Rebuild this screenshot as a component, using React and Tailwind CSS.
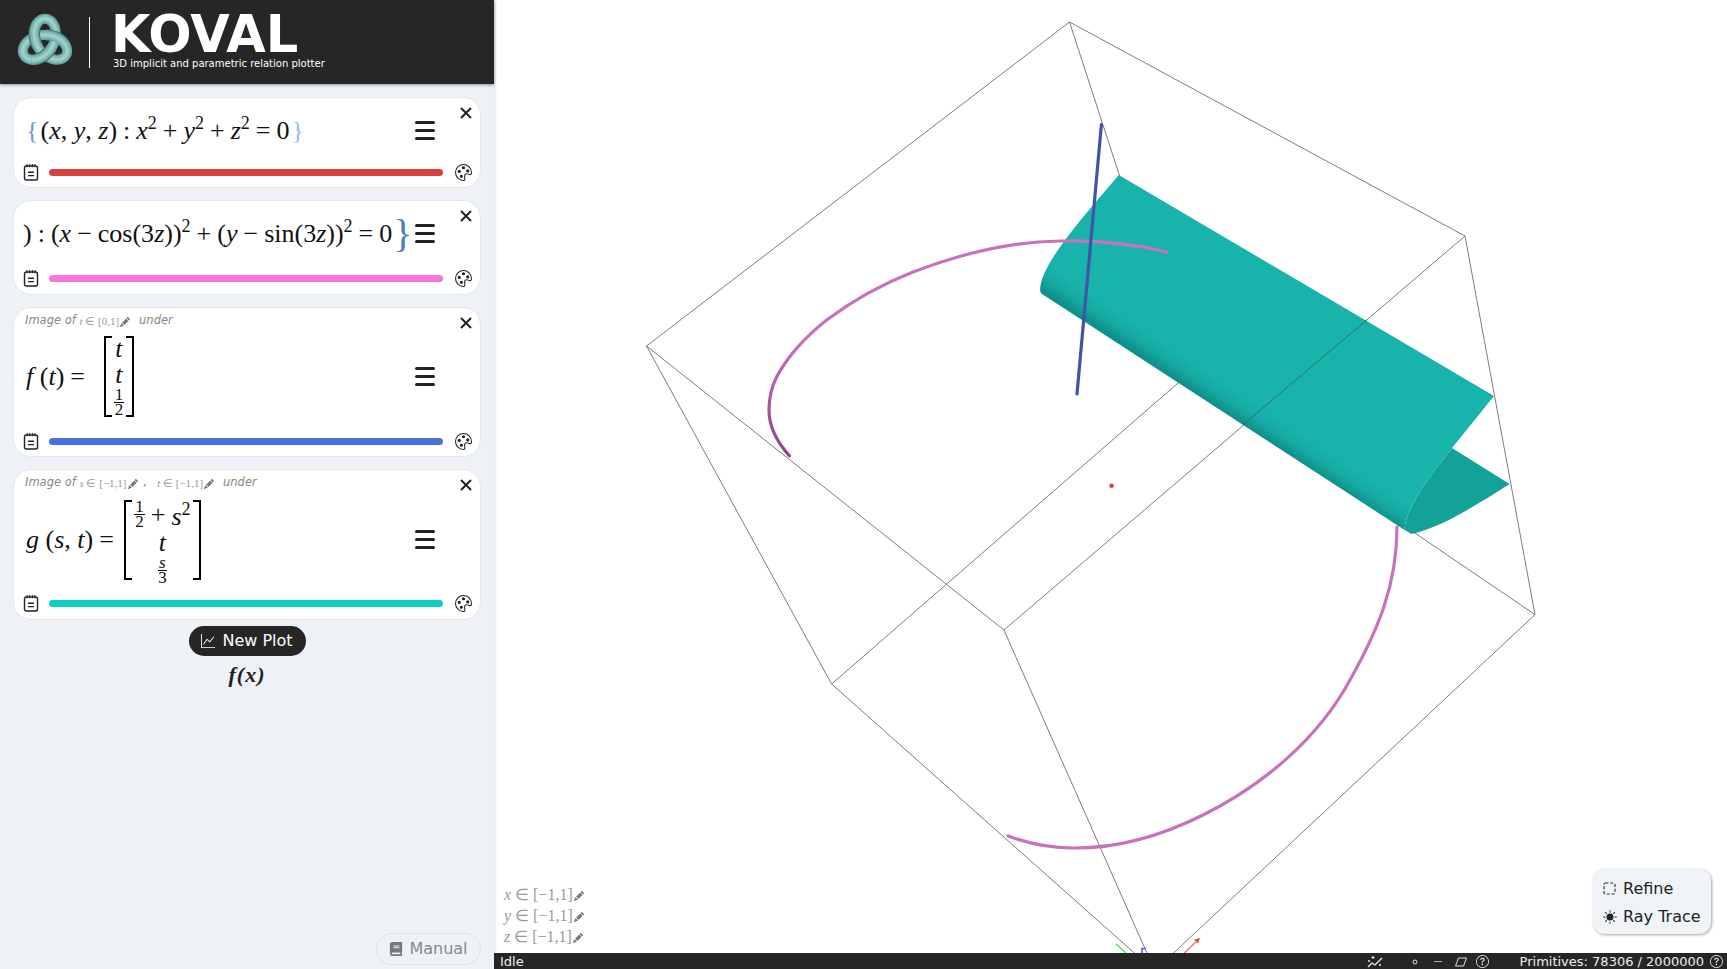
import React from 'react';
import { BsPalette, BsPencilFill, BsGraphUp, BsSunFill, BsQuestionCircle } from 'react-icons/bs';
import { FaBook } from 'react-icons/fa';

const serif = "font-['Liberation_Serif',serif]";

// Trefoil logo, over/under faked by redrawing the over strands
const knotPath = (from, to) => {
  const pts = [];
  for (let t = from; t <= to + 0.001; t += 0.04) {
    pts.push([
      (45 + 8.1 * (Math.sin(t) + 2 * Math.sin(2 * t))).toFixed(2),
      (43 + 8.1 * (Math.cos(t) - 2 * Math.cos(2 * t))).toFixed(2),
    ]);
  }
  return 'M' + pts.map((p) => p.join(' ')).join(' L');
};

const Strand = ({ d }) => (
  <>
    <path d={d} fill="none" stroke="#649d99" strokeWidth="10" />
    <path d={d} fill="none" stroke="#80b9b4" strokeWidth="7.5" />
    <path d={d} fill="none" stroke="#9ccfca" strokeWidth="3.5" />
  </>
);

const Logo = () => (
  <svg width="89" height="84" viewBox="0 0 89 84" className="shrink-0">
    <Strand d={knotPath(0, Math.PI * 2 + 0.04)} />
    {[0.271, 2.366, 4.46].map((c) => (
      <g key={c}>
        <path d={knotPath(c - 0.26, c + 0.26)} fill="none" stroke="#3d6361" strokeWidth="11.5" />
        <Strand d={knotPath(c - 0.42, c + 0.42)} />
      </g>
    ))}
  </svg>
);

const Notepad = () => (
  <svg width="16" height="18" viewBox="0 0 16 18" fill="none" stroke="#222" strokeWidth="1.4" className="shrink-0">
    <rect x="1.5" y="3" width="13" height="14" rx="1.8" />
    <path d="M4 1v3.2M6.7 1v3.2M9.4 1v3.2M12 1v3.2" strokeWidth="1.1" />
    <path d="M5 9.3h6M5 12.6h6" />
  </svg>
);

const Hamburger = () => (
  <div className="flex w-5 shrink-0 flex-col gap-[5px]">
    <div className="h-[3px] rounded-full bg-[#222]" />
    <div className="h-[3px] rounded-full bg-[#222]" />
    <div className="h-[3px] rounded-full bg-[#222]" />
  </div>
);

const Close = () => (
  <svg width="12" height="12" viewBox="0 0 12 12" stroke="#222" strokeWidth="2" className="absolute right-[8px] top-[9px]">
    <path d="M1 1l10 10M11 1L1 11" />
  </svg>
);

const Sup = ({ children }) => <span className="align-[10px] text-[18px] leading-none">{children}</span>;

const Op = ({ children }) => <span className="mx-[6px]">{children}</span>;

const Frac = ({ top, bottom }) => (
  <span className="inline-flex flex-col items-center text-[17px] leading-[14px]">
    <span className="border-b border-black px-px">{top}</span>
    <span>{bottom}</span>
  </span>
);

const Matrix = ({ className, children }) => (
  <span className={`inline-flex items-stretch leading-none ${className}`}>
    <span className="w-[8px] border-y-2 border-l-2 border-black" />
    <span className="flex flex-1 flex-col items-center justify-around">{children}</span>
    <span className="w-[8px] border-y-2 border-r-2 border-black" />
  </span>
);

const Range = ({ v, hi = '1', lo = '−1', size }) => (
  <span className={`${serif} not-italic text-[#9a9a9a] ${size}`}>
    <i>{v}</i> ∈ [{lo},{hi}]
    <BsPencilFill className="ml-px inline text-[10px] text-[#777]" />
  </span>
);

const Card = ({ head, mainH, footMt, pb, color, children }) => (
  <div className="relative flex flex-col rounded-[18px] border border-[#e3e7eb] bg-white" style={{ paddingBottom: pb }}>
    <Close />
    {head && (
      <div className="flex h-[26px] items-center pl-[11px] font-['DejaVu_Sans',sans-serif] text-[11.5px] italic text-[#888]">
        {head}
      </div>
    )}
    <div className="flex items-center justify-between pl-[12px] pr-[45px]" style={{ height: mainH }}>
      <div className={`${serif} flex items-center whitespace-nowrap text-[26px] text-[#111]`}>{children}</div>
      <Hamburger />
    </div>
    <div className="flex h-[18px] items-center pl-[9px] pr-[8px]" style={{ marginTop: footMt }}>
      <Notepad />
      <div className="ml-[10px] mr-[12px] h-[7px] flex-1 rounded-full" style={{ backgroundColor: color }} />
      <BsPalette className="shrink-0 text-[17px] text-[#222]" />
    </div>
  </div>
);

const Sidebar = () => (
  <aside className="z-10 flex h-full w-[494px] shrink-0 flex-col bg-[#eef2f6] shadow-[0_0_4px_rgba(0,0,0,0.2)]">
    <header className="flex h-[84px] shrink-0 items-center bg-[#262626] shadow-[0_1px_3px_rgba(0,0,0,0.4)]">
      <Logo />
      <div className="h-[51px] w-px bg-white" />
      <div className="-mt-[3px] ml-[21px] flex flex-col font-['DejaVu_Sans',sans-serif] text-white">
        <span className="h-[47px] text-[51px] font-bold leading-[50px]">KOVAL</span>
        <span className="pl-[2px] text-[10px] leading-[14px]">3D implicit and parametric relation plotter</span>
      </div>
    </header>

    <div className="flex flex-col gap-3 px-[13px] pt-[13px]">
      <Card mainH={65} footMt={0} pb={6} color="#d84040">
        <span>
          <span className="mr-[2px] text-[#6f9bd0]">{'{'}</span>(<i>x</i>, <i>y</i>, <i>z</i>)<Op>:</Op>
          <i>x</i>
          <Sup>2</Sup>
          <Op>+</Op>
          <i>y</i>
          <Sup>2</Sup>
          <Op>+</Op>
          <i>z</i>
          <Sup>2</Sup>
          <Op>=</Op>0<span className="ml-[2px] text-[#9dbbe0]">{'}'}</span>
        </span>
      </Card>

      <Card mainH={65} footMt={3} pb={7} color="#f876d6">
        <span className="-ml-[3px] flex items-center">
          <span>
            )<Op>:</Op>(<i>x</i>
            <Op>−</Op>cos(3<i>z</i>))<Sup>2</Sup>
            <Op>+</Op>(<i>y</i>
            <Op>−</Op>sin(3<i>z</i>))<Sup>2</Sup>
            <Op>=</Op>0
          </span>
          <span className="ml-[1px] text-[40px] font-light leading-none text-[#4b80c0]">{'}'}</span>
        </span>
      </Card>

      <Card
        mainH={85}
        footMt={13}
        pb={6}
        color="#4c6fe0"
        head={
          <>
            Image of&nbsp;
            <Range v="t" lo="0" size="text-[11px]" />
            <span className="ml-[9px]">under</span>
          </>
        }
      >
        <span className="flex items-center">
          <span>
            <i>f</i> (<i>t</i>)<Op>=</Op>
          </span>
          <Matrix className="ml-[13px] h-[81px] w-[30px]">
            <i>t</i>
            <i>t</i>
            <Frac top="1" bottom="2" />
          </Matrix>
        </span>
      </Card>

      <Card
        mainH={87}
        footMt={11}
        pb={7}
        color="#0fcfbf"
        head={
          <>
            Image of&nbsp;
            <Range v="s" size="text-[11px]" />
            <span className="mx-[6px]">,</span>
            <Range v="t" size="ml-[4px] text-[11px]" />
            <span className="ml-[9px]">under</span>
          </>
        }
      >
        <span className="flex items-center">
          <span>
            <i>g</i> (<i>s</i>, <i>t</i>)<Op>=</Op>
          </span>
          <Matrix className="ml-[4px] h-[80px] w-[77px]">
            <span className="flex items-center leading-none">
              <Frac top="1" bottom="2" />
              <Op>+</Op>
              <span>
                <i>s</i>
                <Sup>2</Sup>
              </span>
            </span>
            <i>t</i>
            <Frac top={<i>s</i>} bottom="3" />
          </Matrix>
        </span>
      </Card>
    </div>

    <button className="mt-[6px] flex h-[30px] w-[117px] items-center justify-center gap-[7px] self-center rounded-full bg-[#262626] font-['DejaVu_Sans',sans-serif] text-[16px] text-white">
      <BsGraphUp className="text-[14px]" />
      New Plot
    </button>
    <div className={`${serif} mt-[4px] self-center text-[22px] font-bold italic leading-[30px] tracking-[1px] text-[#222]`}>
      f(x)
    </div>

    <button className="mb-[4px] mr-[13px] mt-auto flex h-[32px] w-[105px] items-center justify-center gap-[6px] self-end rounded-full border border-[#dde2e7] font-['DejaVu_Sans',sans-serif] text-[16px] text-[#888]">
      <FaBook className="text-[14px] text-[#777]" />
      Manual
    </button>
  </aside>
);

const edges = [
  'M1069.5 22L646.5 346',
  'M1069.5 22L1465 236',
  'M1069.5 22L1185 377',
  'M646.5 346L1004 630',
  'M646.5 346L831.6 684',
  'M1465 236L1535 614.6',
  'M831.6 684L1185 377',
  'M1185 377L1535 614.6',
  'M1004 630L1465 236',
  'M831.6 684L1149 966',
  'M1004 630L1150 960',
  'M1535 614.6L1165 961',
];

const Plot = () => (
  <svg viewBox="494 0 1233 953" className="h-full w-full">
    <defs>
      <linearGradient id="sheet" gradientUnits="userSpaceOnUse" x1="1223" y1="411" x2="1237" y2="390">
        <stop offset="0" stopColor="#0e8f88" />
        <stop offset="0.45" stopColor="#15a9a1" />
        <stop offset="1" stopColor="#18b4ac" />
      </linearGradient>
      <linearGradient id="pink" gradientUnits="userSpaceOnUse" x1="0" y1="340" x2="0" y2="455">
        <stop offset="0" stopColor="#c872bb" />
        <stop offset="1" stopColor="#93427f" />
      </linearGradient>
    </defs>

    <g fill="none" stroke="#7c7c7c" strokeWidth="1">
      {edges.map((d) => (
        <path key={d} d={d} />
      ))}
    </g>

    <path
      d="M1397 527C1397 585 1378 630 1350 680C1318 739 1263 785 1203 815C1159 837 1117 848.5 1073 848C1051 848 1030 844 1008 836"
      fill="none"
      stroke="#c872bb"
      strokeWidth="3.2"
      strokeLinecap="round"
    />

    {/* back of the sheet, then the front */}
    <path d="M1452 448L1509.6 484C1475 506 1440 528 1411.5 534L1404.6 530C1404.6 510 1428 478 1452 448Z" fill="#13a29a" />
    <path
      d="M1118.8 175C1082 218 1043 262 1040.3 287C1040 291 1040 292 1042 294L1404.6 530C1404.6 510 1428 478 1452 448L1494 396Z"
      fill="url(#sheet)"
    />
    <path d="M1242.8 425L1366.7 320" stroke="#2f6f6b" strokeWidth="1" fill="none" />

    <path
      d="M1167 252C1130 243 1095 240 1060 241C1010 241.5 960 254 913 272C885 283 852 301 826.7 320C809 334 789 354 776.7 376.7C771 388 769 399 769 410C769 426 777 442 789.3 455.7"
      fill="none"
      stroke="url(#pink)"
      strokeWidth="3.2"
      strokeLinecap="round"
    />
    <path d="M1101.4 124.5L1077 394" stroke="#3f56a8" strokeWidth="3.2" strokeLinecap="round" />
    <circle cx="1111.6" cy="485.7" r="2.3" fill="#d04545" />

    {/* axes helper poking out above the status bar */}
    <path d="M1116 944L1126 953" stroke="#4cd44c" strokeWidth="1.2" />
    <path d="M1142 953v-4.5h4" stroke="#5a5ae0" strokeWidth="1.6" fill="none" />
    <path d="M1184.3 953L1198 940" stroke="#e87878" strokeWidth="1.4" />
    <path d="M1200 938l-6 1.5 4 4z" fill="#d85050" />
  </svg>
);

const Ranges = () => (
  <div className="absolute bottom-[6px] left-[10px] flex flex-col">
    {['x', 'y', 'z'].map((v) => (
      <div key={v} className="flex h-[21px] items-center">
        <Range v={v} size="text-[16px]" />
      </div>
    ))}
  </div>
);

const RenderMenu = () => (
  <div className="absolute bottom-[19px] right-[16px] flex h-[65px] w-[118px] flex-col justify-center gap-[6px] rounded-[12px] bg-[#f0f4f8] pl-[10px] pt-[2px] font-['DejaVu_Sans',sans-serif] text-[16px] leading-[22px] text-[#222] shadow-[1px_1px_3px_rgba(0,0,0,0.35)]">
    <div className="flex items-center gap-[7px]">
      <svg width="13" height="13" viewBox="0 0 13 13" fill="none" stroke="#333" strokeWidth="1.2" strokeDasharray="3 1.8">
        <rect x="1" y="1" width="11" height="11" rx="1.5" />
      </svg>
      Refine
    </div>
    <div className="flex items-center gap-[6px]">
      <BsSunFill className="text-[14px] text-[#222]" />
      Ray Trace
    </div>
  </div>
);

const StatusBar = () => (
  <footer className="flex h-4 shrink-0 items-center justify-between bg-[#262626] pl-[6px] pr-[4px] pt-px font-['DejaVu_Sans',sans-serif] text-[13px] leading-4 text-[#eee]">
    <span>Idle</span>
    <div className="flex items-center">
      <svg width="17" height="14" viewBox="0 0 17 14" fill="none" stroke="#eee" strokeWidth="1.3">
        <path d="M1 12l4-4 3 2 7-7" />
        <path d="M6 1v3M4.5 2.5h3M2 5v2M1 6h2M13 9v2M12 10h2" strokeWidth="1" />
      </svg>
      <svg width="6" height="6" viewBox="0 0 6 6" fill="none" stroke="#ddd" className="ml-[28px]">
        <circle cx="3" cy="3" r="2" />
      </svg>
      <div className="ml-[16px] h-px w-[8px] bg-[#aaa]" />
      <svg width="12" height="10" viewBox="0 0 12 10" fill="none" stroke="#ddd" className="ml-[13px]">
        <path d="M3.5 1h8L8.5 9h-8z" />
      </svg>
      <BsQuestionCircle className="ml-[9px] text-[13px]" />
      <span className="ml-[31px]">Primitives: 78306 / 2000000</span>
      <BsQuestionCircle className="ml-[6px] text-[13px]" />
    </div>
  </footer>
);

export default function App() {
  return (
    <div className="flex h-screen w-full overflow-hidden bg-white">
      <Sidebar />
      <main className="flex min-w-0 flex-1 flex-col">
        <div className="relative min-h-0 flex-1">
          <Plot />
          <Ranges />
          <RenderMenu />
        </div>
        <StatusBar />
      </main>
    </div>
  );
}
